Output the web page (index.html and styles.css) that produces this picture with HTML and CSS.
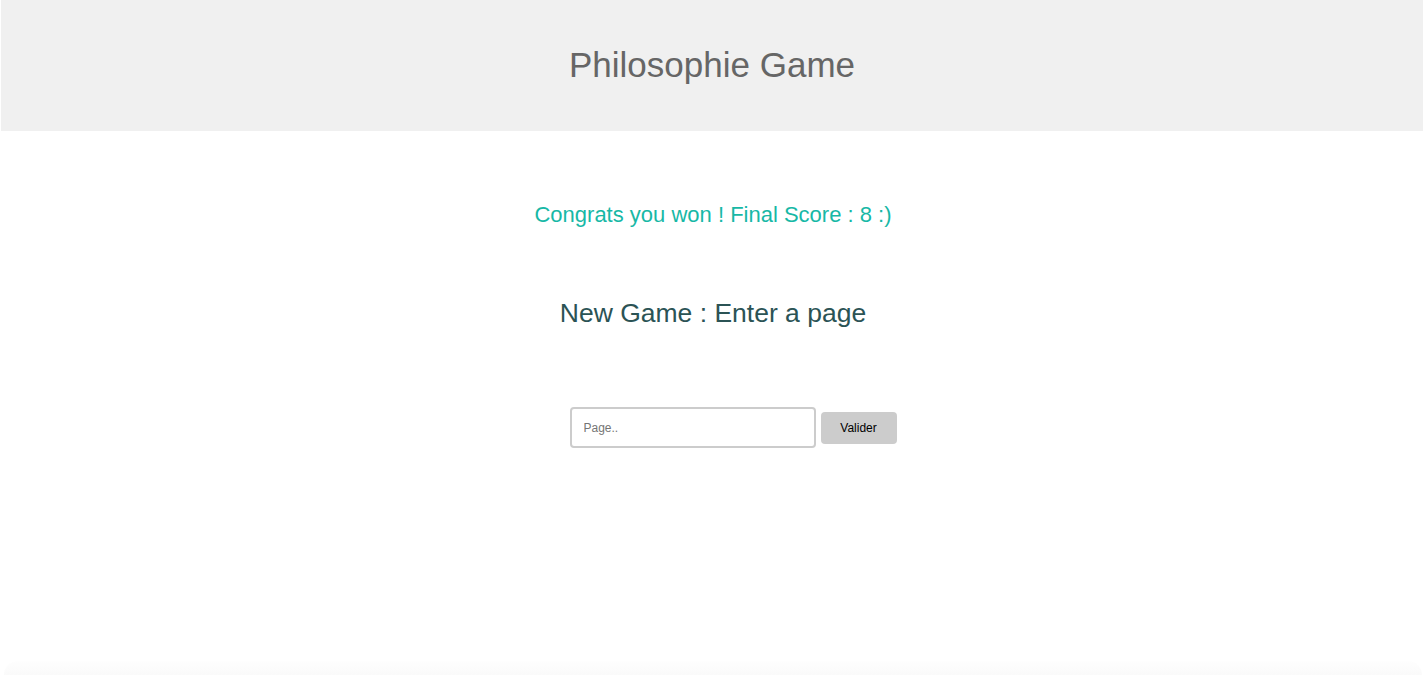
FILE: index.html
```html
<!DOCTYPE html>
<html>
<head>
<meta charset="utf-8">
<link rel="stylesheet" href="styles.css">
</head>
<body>
<div class="page">
  <header class="header">
    <h1 class="title">Philosophie Game</h1>
  </header>
  <main class="main">
    <p class="congrats">Congrats you won ! Final Score : 8 :)</p>
    <h2 class="subtitle">New Game : Enter a page</h2>
    <form class="form">
      <input class="input" type="text" placeholder="Page..">
      <button class="btn" type="button">Valider</button>
    </form>
  </main>
  <div class="shadow"></div>
</div>
</body>
</html>
```

FILE: styles.css
```css
html, body {
  margin: 0;
  padding: 0;
  background: #fff;
  font-family: "Liberation Sans", Arial, sans-serif;
}
.page {
  height: 675px;
  display: flex;
  flex-direction: column;
  overflow: hidden;
}
.header {
  background: #f0f0f0;
  margin: 0 3px 0 1px;
  height: 131px;
  display: flex;
  align-items: center;
  justify-content: center;
}
.title {
  margin: 0 0 2px;
  font-weight: normal;
  font-size: 35px;
  color: #666;
  letter-spacing: 0;
}
.main {
  flex: 1;
  display: flex;
  flex-direction: column;
  align-items: center;
}
.congrats {
  margin: 71px 0 0;
  font-size: 22px;
  color: #17b8a6;
  letter-spacing: 0;
}
.subtitle {
  margin: 70px 0 0;
  font-weight: normal;
  font-size: 26.5px;
  color: #2b5355;
}
.form {
  margin: 78px 0 0 40px;
  display: flex;
  align-items: center;
  gap: 5px;
}
.input {
  box-sizing: border-box;
  width: 246px;
  height: 41px;
  border: 2px solid #ccc;
  border-radius: 4px;
  padding: 1px 12px 0;
  font-family: "Liberation Sans", Arial, sans-serif;
  font-size: 12px;
  outline: none;
}
.input::placeholder {
  color: #757575;
}
.btn {
  box-sizing: border-box;
  width: 76px;
  height: 32px;
  border: none;
  border-radius: 4px;
  background: #ccc;
  color: #000;
  padding-top: 1px;
  font-family: "Liberation Sans", Arial, sans-serif;
  font-size: 12px;
}
.shadow {
  height: 14px;
  margin: 0 4px;
  border-radius: 14px 14px 0 0;
  background: linear-gradient(#fefefe, #fafafa);
}
```
